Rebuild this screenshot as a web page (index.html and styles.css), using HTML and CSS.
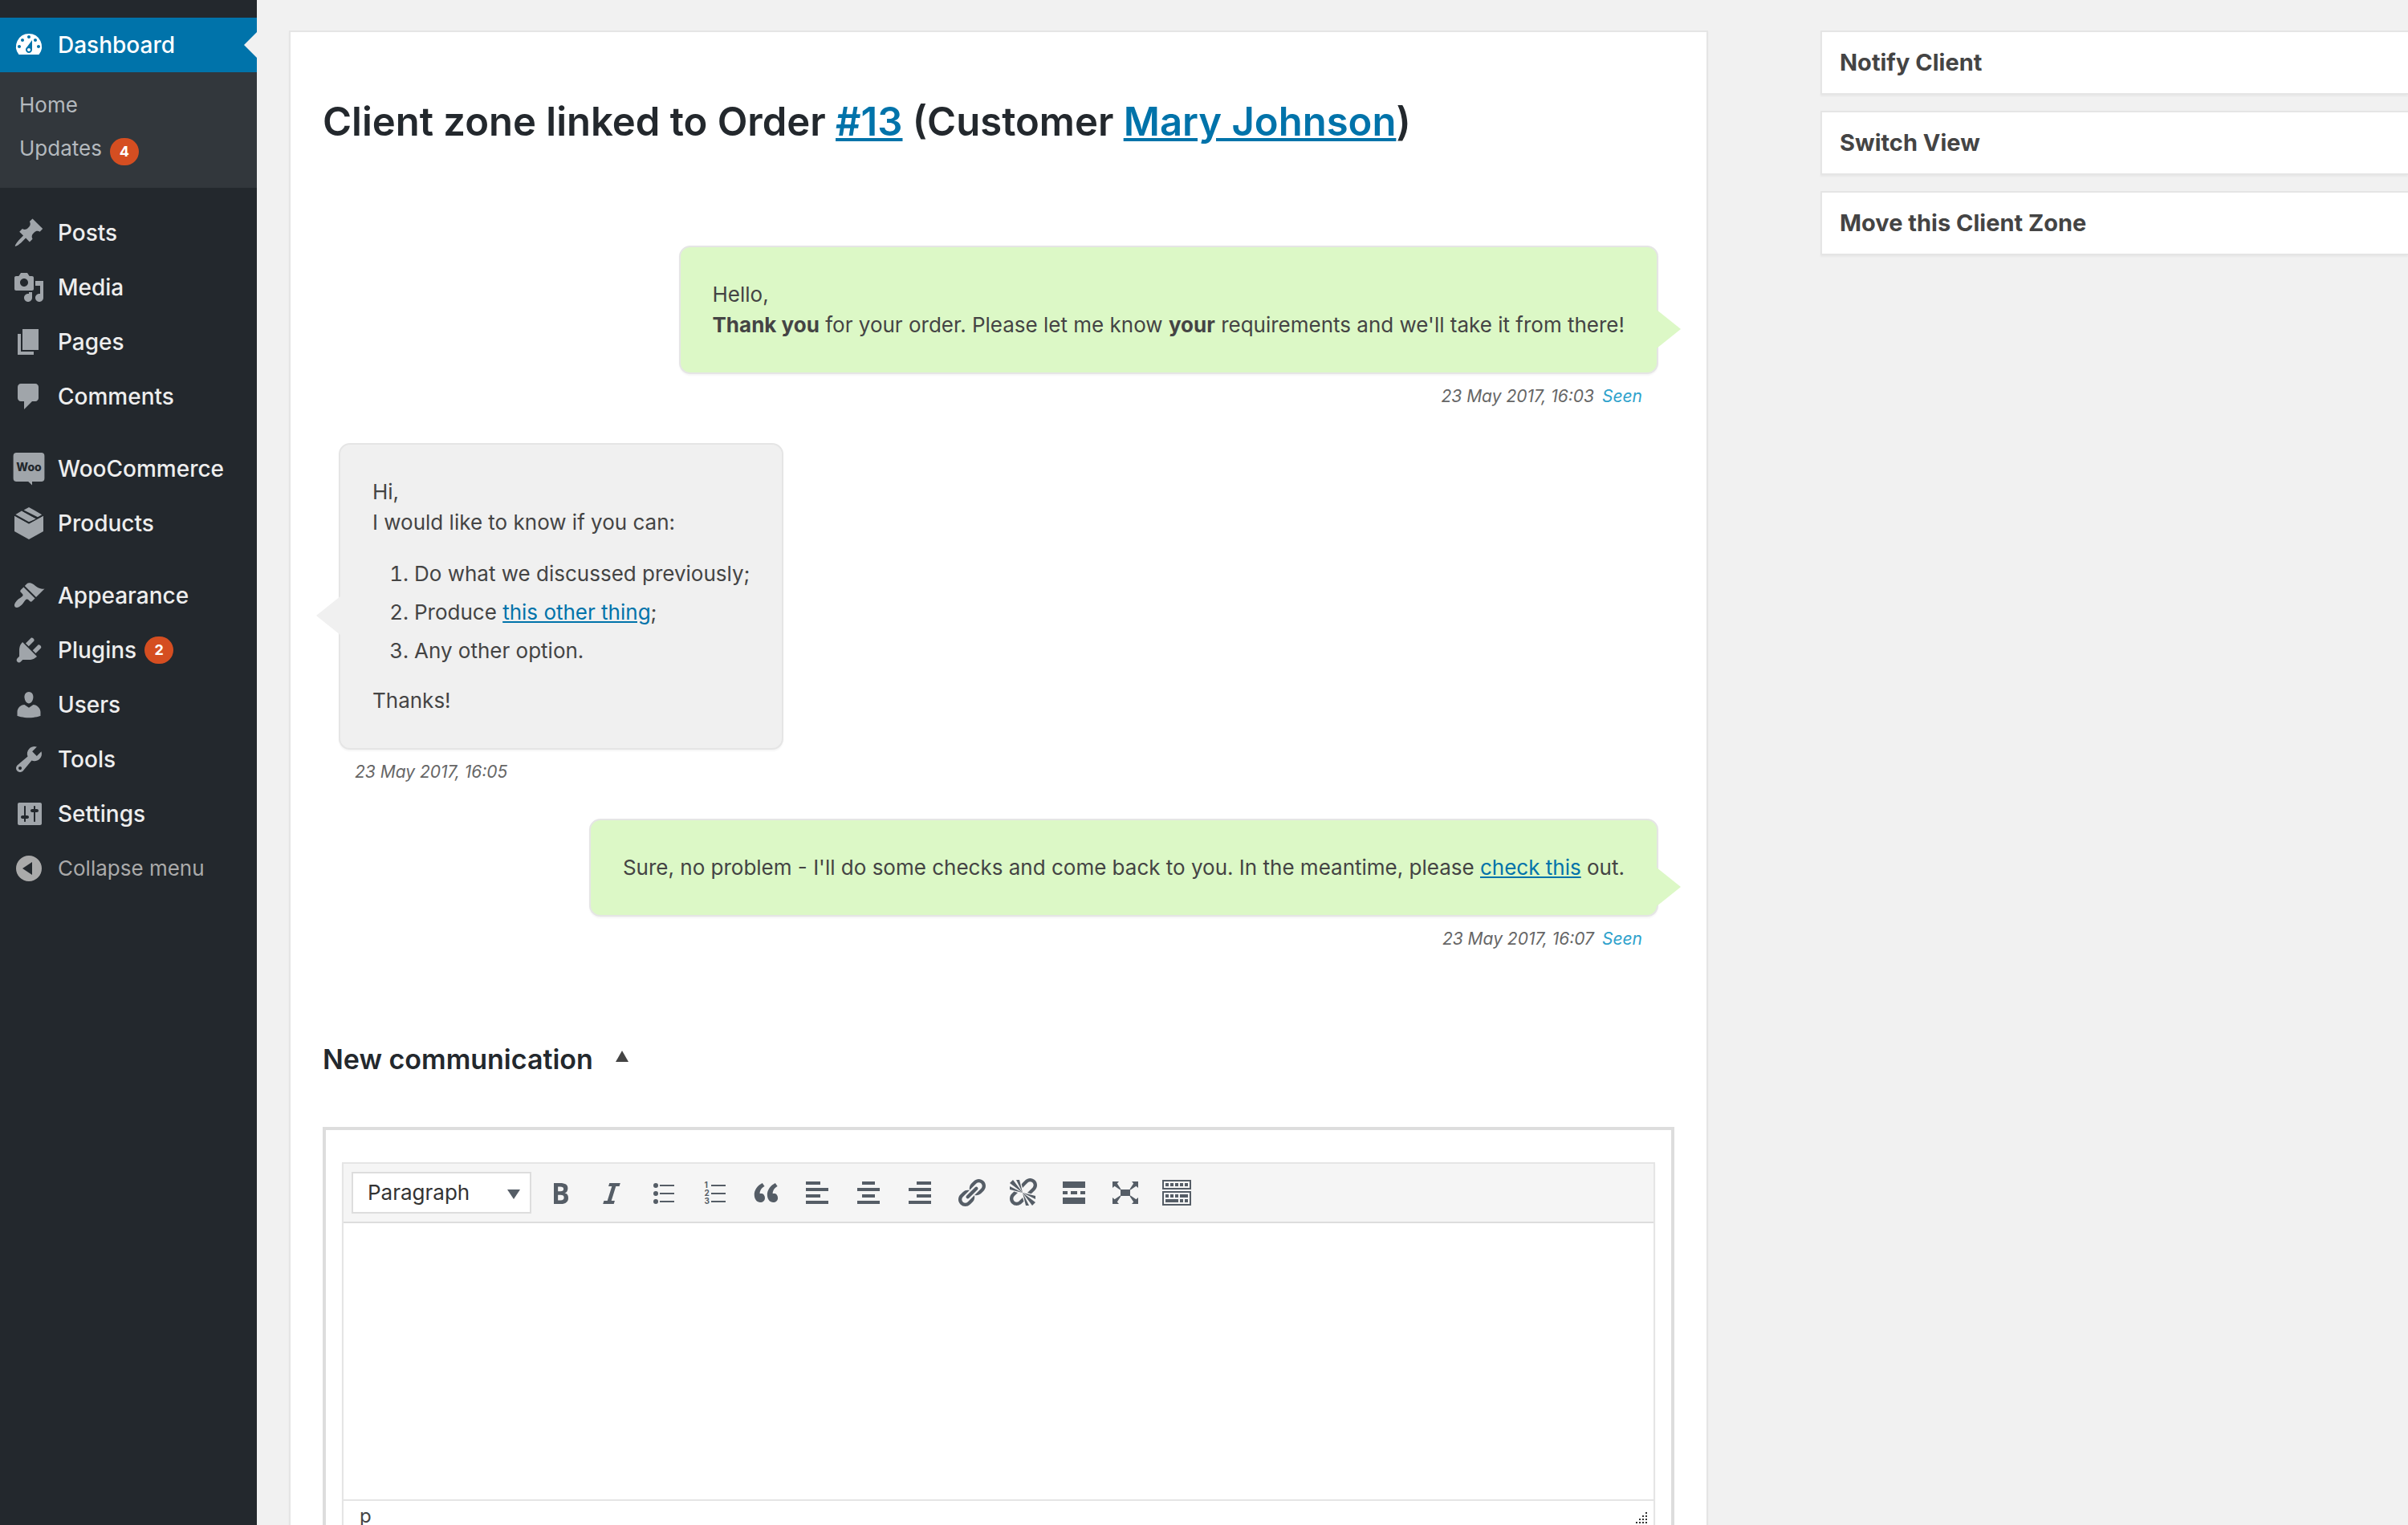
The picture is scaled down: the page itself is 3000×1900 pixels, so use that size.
FILE: index.html
```html
<!DOCTYPE html>
<html lang="en">
<head>
<meta charset="utf-8">
<title>Client zone</title>
<link rel="stylesheet" href="styles.css">
</head>
<body>
<div class="app">
  <nav class="sidebar" aria-label="Main menu">
    <ul class="menu">
      <li>
        <a class="menu-link current" href="#"><svg class="icon" viewBox="0 0 20 20"><path d="M3.76 16h12.48A7.998 7.998 0 0 0 10 3a7.998 7.998 0 0 0-6.24 13zM10 4c.55 0 1 .45 1 1s-.45 1-1 1-1-.45-1-1 .45-1 1-1zM6 6c.55 0 1 .45 1 1s-.45 1-1 1-1-.45-1-1 .45-1 1-1zm8 0c.55 0 1 .45 1 1s-.45 1-1 1-1-.45-1-1 .45-1 1-1zm-5.37 5.55L12 7v6c0 1.1-.9 2-2 2s-2-.9-2-2c0-.57.24-1.08.63-1.45zM4 10c.55 0 1 .45 1 1s-.45 1-1 1-1-.45-1-1 .45-1 1-1zm12 0c.55 0 1 .45 1 1s-.45 1-1 1-1-.45-1-1 .45-1 1-1zm-5 3c0-.55-.45-1-1-1s-1 .45-1 1 .45 1 1 1 1-.45 1-1z"/></svg>Dashboard</a>
        <ul class="submenu">
          <li><a href="#">Home</a></li>
          <li><a href="#">Updates <span class="badge">4</span></a></li>
        </ul>
      </li>
      <li class="group"><a class="menu-link" href="#"><svg class="icon" viewBox="0 0 20 20"><path d="M10.44 3.02l1.82-1.82 6.36 6.35-1.83 1.82c-1.05-.68-2.48-.57-3.41.36l-.75.75c-.92.93-1.04 2.35-.35 3.41l-1.83 1.82-2.41-2.41-2.8 2.79c-.42.42-3.38 2.71-3.8 2.29s1.86-3.39 2.28-3.81l2.79-2.79L4.1 9.36l1.83-1.82c1.05.69 2.48.57 3.4-.36l.75-.75c.93-.92 1.05-2.35.36-3.41z"/></svg>Posts</a></li>
      <li><a class="menu-link" href="#"><svg class="icon" viewBox="0 0 20 20"><path d="M13 11V4c0-.55-.45-1-1-1h-1.67L9 1H5L3.67 3H2c-.55 0-1 .45-1 1v7c0 .55.45 1 1 1h10c.55 0 1-.45 1-1zM7 4.5c1.38 0 2.5 1.12 2.5 2.5S8.38 9.5 7 9.5 4.5 8.38 4.5 7 5.62 4.5 7 4.5zM14 6h5v10.5c0 1.38-1.12 2.5-2.5 2.5S14 17.88 14 16.5s1.12-2.5 2.5-2.5c.17 0 .34.02.5.05V9h-3V6zm-4 8.05V13h2v3.5c0 1.38-1.12 2.5-2.5 2.5S7 17.88 7 16.5 8.12 14 9.5 14c.17 0 .34.02.5.05z"/></svg>Media</a></li>
      <li><a class="menu-link" href="#"><svg class="icon" viewBox="0 0 20 20"><path d="M6 15V2h10v13H6zm-1 1h8v2H3V5h2v11z"/></svg>Pages</a></li>
      <li><a class="menu-link" href="#"><svg class="icon" viewBox="0 0 20 20"><path d="M5 2h9c1.1 0 2 .9 2 2v7c0 1.1-.9 2-2 2h-2l-5 5v-5H5c-1.1 0-2-.9-2-2V4c0-1.1.9-2 2-2z"/></svg>Comments</a></li>
      <li class="group"><a class="menu-link" href="#"><svg class="icon" viewBox="0 0 20 20"><path d="M2.300 0h15.400a2 2 0 0 1 2 2v14a2 2 0 0 1-2 2H12v2.200L9.600 18H2.300a2 2 0 0 1-2-2V2a2 2 0 0 1 2-2z"/><text class="woo-mark" x="10" y="11.300" text-anchor="middle" aria-hidden="true">Woo</text></svg>WooCommerce</a></li>
      <li><a class="menu-link" href="#"><svg class="icon" viewBox="0 0 20 20"><path d="M10 0l3.200 1.800 4.900 2.800-2.600 1.500L6.800 1.800zM5.500 2.300l9.100 5L10 9.100 1.700 4.500zM1 5.300l9 5 9-5v9.700l-9 5-9-5z"/><path class="box-fold" d="M1 5l9 4.900L19 5M6.200 2.200l9 5"/></svg>Products</a></li>
      <li class="group"><a class="menu-link" href="#"><svg class="icon" viewBox="0 0 20 20"><path d="M14.480 11.060L7.410 3.990l1.500-1.500c.5-.56 2.300-.47 3.510.32 1.210.8 1.430 1.280 2.910 2.100 1.180.64 2.450 1.260 4.450.85zm-.71.71L6.700 4.700 4.930 6.470c-.39.39-.39 1.020 0 1.410l1.060 1.060c.39.39.39 1.030 0 1.420-.6.6-1.430 1.110-2.210 1.690-.35.26-.7.53-1.010.84C1.430 14.230.4 16.080 1.400 17.070c.99 1 2.840-.03 4.180-1.360.31-.31.58-.66.85-1.020.57-.78 1.080-1.610 1.690-2.210.39-.39 1.020-.39 1.410 0l1.060 1.060c.39.39 1.020.39 1.410 0z"/></svg>Appearance</a></li>
      <li><a class="menu-link" href="#"><svg class="icon" viewBox="0 0 20 20"><path d="M13.110 4.360L9.870 7.600 8 5.730l3.240-3.240c.35-.34 1.050-.2 1.560.32.52.51.66 1.210.31 1.550zm-8 1.770l.91-1.120 9.010 9.010-1.190.84c-.71.71-2.630 1.160-3.820 1.160H6.140L4.900 17.260c-.59.59-1.540.59-2.120 0-.59-.58-.59-1.530 0-2.120l1.240-1.240v-3.880c0-1.130.4-3.190 1.090-3.890zm7.260 3.970l3.240-3.240c.34-.35 1.040-.21 1.550.31.52.51.66 1.210.31 1.550l-3.240 3.250z"/></svg>Plugins <span class="badge">2</span></a></li>
      <li><a class="menu-link" href="#"><svg class="icon" viewBox="0 0 20 20"><path d="M10 9.250c-2.270 0-2.730-3.440-2.730-3.440C7 4.020 7.820 2 9.970 2c2.160 0 2.980 2.020 2.710 3.810 0 0-.41 3.440-2.680 3.440zm0 2.570L12.720 10c2.390 0 4.520 2.330 4.520 4.530v2.490s-3.650 1.130-7.240 1.130c-3.650 0-7.240-1.130-7.240-1.130v-2.490c0-2.250 1.940-4.480 4.470-4.480z"/></svg>Users</a></li>
      <li><a class="menu-link" href="#"><svg class="icon" viewBox="0 0 20 20"><path d="M16.680 9.770c-1.340 1.340-3.300 1.670-4.950.99l-5.410 6.520c-.99.99-2.590.99-3.580 0s-.99-2.590 0-3.570l6.520-5.420c-.68-1.650-.35-3.610.99-4.950 1.280-1.280 3.120-1.620 4.720-1.060l-2.890 2.890 2.820 2.820 2.860-2.870c.53 1.580.18 3.390-1.080 4.650zM3.810 16.210c.4.39 1.040.39 1.430 0 .4-.4.4-1.040 0-1.430-.39-.4-1.030-.4-1.430 0-.39.39-.39 1.030 0 1.430z"/></svg>Tools</a></li>
      <li><a class="menu-link" href="#"><svg class="icon" viewBox="0 0 20 20"><path d="M18 16V4c0-.55-.45-1-1-1H4c-.55 0-1 .45-1 1v12c0 .55.45 1 1 1h13c.55 0 1-.45 1-1zM8 11h1c.55 0 1 .45 1 1s-.45 1-1 1H8v1.500c0 .28-.22.5-.5.5s-.5-.22-.5-.5V13H6c-.55 0-1-.45-1-1s.45-1 1-1h1V5.500c0-.28.22-.5.5-.5s.5.22.5.5V11zm5-2h-1c-.55 0-1-.45-1-1s.45-1 1-1h1V5.500c0-.28.22-.5.5-.5s.5.22.5.5V7h1c.55 0 1 .45 1 1s-.45 1-1 1h-1v5.500c0 .28-.22.5-.5.5s-.5-.22-.5-.5V9z"/></svg>Settings</a></li>
      <li><button class="menu-link collapse" type="button"><svg class="icon" viewBox="0 0 20 20"><path fill-rule="evenodd" d="M10 2a8 8 0 1 0 0 16 8 8 0 0 0 0-16zM12 6v8l-6-4z"/></svg>Collapse menu</button></li>
    </ul>
  </nav>

  <main class="content">
    <section class="panel">
      <h1>Client zone linked to Order <a href="#">#13</a> (Customer <a href="#">Mary Johnson</a>)</h1>

      <div class="thread">
        <article class="message sent">
          <div class="bubble"><p>Hello,<br><strong>Thank you</strong> for your order. Please let me know <strong>your</strong> requirements and we'll take it from there!</p></div>
          <p class="meta">23 May 2017, 16:03 <span class="seen">Seen</span></p>
        </article>
        <article class="message received">
          <div class="bubble">
            <p>Hi,<br>I would like to know if you can:</p>
            <ol>
              <li>Do what we discussed previously;</li>
              <li>Produce <a href="#">this other thing</a>;</li>
              <li>Any other option.</li>
            </ol>
            <p>Thanks!</p>
          </div>
          <p class="meta">23 May 2017, 16:05</p>
        </article>
        <article class="message sent">
          <div class="bubble"><p>Sure, no problem - I'll do some checks and come back to you. In the meantime, please <a href="#">check this</a> out.</p></div>
          <p class="meta">23 May 2017, 16:07 <span class="seen">Seen</span></p>
        </article>
      </div>

      <h2><button class="toggle" type="button" aria-expanded="true">New communication <svg class="toggle-arrow" viewBox="0 0 16 14"><path d="M8 0l8 14H0z"/></svg></button></h2>

      <div class="composer">
        <div class="editor">
          <div class="toolbar" role="toolbar" aria-label="Formatting">
            <div class="format">
              <select aria-label="Text format"><option>Paragraph</option></select>
              <svg class="format-arrow" viewBox="0 0 16 12"><path d="M0 0h16L8 12z"/></svg>
            </div>
            <button class="tool" type="button" aria-label="Bold"><svg class="icon" viewBox="0 0 20 20"><path d="M6 4v13h4.540c1.370 0 2.460-.33 3.260-1 .8-.66 1.200-1.580 1.200-2.770 0-.84-.17-1.510-.51-2.010s-.9-.85-1.670-1.030v-.09c.57-.1 1.020-.4 1.360-.9s.51-1.130.51-1.910c0-1.140-.39-1.980-1.170-2.500C12.750 4.260 11.500 4 9.780 4H6zm2.570 5.150V6.260h1.360c.73 0 1.270.11 1.610.32.34.22.51.58.51 1.070 0 .54-.16.92-.47 1.150s-.82.35-1.510.35h-1.500zm0 2.190h1.600c1.440 0 2.160.53 2.160 1.610 0 .6-.17 1.050-.51 1.340s-.86.43-1.570.43H8.570v-3.380z"/></svg></button>
            <button class="tool" type="button" aria-label="Italic"><svg class="icon" viewBox="0 0 20 20"><path d="M14.780 6h-2.130l-2.800 9h2.120l-.62 2H4.600l.62-2h2.140l2.800-9H8.030l.62-2h6.750z"/></svg></button>
            <button class="tool" type="button" aria-label="Bulleted list"><svg class="icon" viewBox="0 0 20 20"><circle cx="5.500" cy="5.500" r="1.500"/><circle cx="5.500" cy="10.500" r="1.500"/><circle cx="5.500" cy="15.500" r="1.500"/><path d="M8 5h9v1H8zM8 10h9v1H8zM8 15h9v1H8z"/></svg></button>
            <button class="tool" type="button" aria-label="Numbered list"><svg class="icon" viewBox="0 0 20 20"><path d="M8 5h9v1H8zM8 10h9v1H8zM8 15h9v1H8z"/><g class="list-digits" aria-hidden="true"><text x="3.800" y="7">1</text><text x="3.800" y="12">2</text><text x="3.800" y="17">3</text></g></svg></button>
            <button class="tool" type="button" aria-label="Blockquote"><svg class="icon" viewBox="0 0 20 20"><path d="M9.490 13.220c0-.74-.2-1.380-.61-1.900-.62-.78-1.830-.88-2.530-.72-.29-1.650 1.110-3.750 2.920-4.650L7.880 4c-2.730 1.300-5.420 4.280-4.960 8.050C3.210 14.430 4.590 16 6.540 16c.85 0 1.560-.25 2.120-.75s.83-1.180.83-2.030zm8.050 0c0-.74-.2-1.380-.61-1.900-.63-.78-1.830-.88-2.530-.72-.29-1.650 1.110-3.750 2.920-4.650L15.930 4c-2.730 1.300-5.410 4.280-4.950 8.050.29 2.380 1.660 3.950 3.610 3.950.85 0 1.560-.25 2.120-.75s.83-1.180.83-2.030z"/></svg></button>
            <button class="tool" type="button" aria-label="Align left"><svg class="icon" viewBox="0 0 20 20"><path d="M3 3h9v2H3zM3 7h14v2H3zM3 11h9v2H3zM3 15h14v2H3z"/></svg></button>
            <button class="tool" type="button" aria-label="Align centre"><svg class="icon" viewBox="0 0 20 20"><path d="M6 3h8v2H6zM3 7h14v2H3zM6 11h8v2H6zM3 15h14v2H3z"/></svg></button>
            <button class="tool" type="button" aria-label="Align right"><svg class="icon" viewBox="0 0 20 20"><path d="M8 3h9v2H8zM3 7h14v2H3zM8 11h9v2H8zM3 15h14v2H3z"/></svg></button>
            <button class="tool" type="button" aria-label="Insert link"><svg class="icon" viewBox="0 0 20 20"><path d="M17.740 2.760c1.680 1.690 1.680 4.410 0 6.100l-1.530 1.520c-1.120 1.120-2.700 1.470-4.140 1.090l2.620-2.610.76-.77.76-.76c.84-.84.84-2.200 0-3.040-.84-.85-2.200-.85-3.040 0l-.77.76-3.380 3.380c-.37-1.440-.02-3.020 1.100-4.140l1.520-1.530c1.690-1.680 4.420-1.680 6.100 0zM8.590 13.430l5.340-5.340c.42-.42.42-1.100 0-1.520-.44-.43-1.130-.39-1.530 0l-5.330 5.340c-.42.42-.42 1.100 0 1.520.44.43 1.130.39 1.520 0zm-.76 2.290l4.140-4.150c.38 1.440.03 3.020-1.090 4.140l-1.520 1.530c-1.690 1.680-4.410 1.680-6.100 0-1.680-1.680-1.680-4.420 0-6.100l1.530-1.520c1.120-1.120 2.700-1.470 4.140-1.100l-4.140 4.150c-.85.84-.85 2.200 0 3.050.84.84 2.200.84 3.040 0z"/></svg></button>
            <button class="tool" type="button" aria-label="Remove link"><svg class="icon" viewBox="0 0 20 20"><path d="M17.740 2.260c1.680 1.690 1.680 4.410 0 6.100l-1.530 1.520c-.32.33-.69.58-1.080.77L13 10l1.690-1.640.76-.77.76-.76c.84-.84.84-2.200 0-3.040-.84-.85-2.200-.85-3.040 0l-.77.76-.76.76L10 7l-.65-2.140c.19-.38.44-.75.77-1.070l1.520-1.530c1.690-1.680 4.420-1.680 6.100 0zM2 4l8 6-6-8zm4-2l4 8-2-8H6zM2 6l8 4-8-2V6zm7.360 7.690L10 13l.74 2.350-1.380 1.390c-1.690 1.680-4.410 1.680-6.100 0-1.680-1.680-1.680-4.420 0-6.100l1.390-1.380L7 10l-.69.64-1.520 1.530c-.85.84-.85 2.200 0 3.040.84.85 2.200.85 3.040 0zM18 16l-8-6 6 8zm-4 2l-4-8 2 8h2zm4-4l-8-4 8 2v2z"/></svg></button>
            <button class="tool" type="button" aria-label="Read more tag"><svg class="icon" viewBox="0 0 20 20"><path d="M17 7V3H3v4h14zM6 11V9H3v2h3zm6 0V9H8v2h4zm5 0V9h-3v2h3zm0 6v-4H3v4h14z"/></svg></button>
            <button class="tool" type="button" aria-label="Full screen"><svg class="icon" viewBox="0 0 20 20"><path d="M7 8h6v4H7zM2 3h4L4.900 4.300 7.200 7.800 6.800 8.200 3.300 5.900 2 7zM18 3h-4l1.100 1.300-2.300 3.500.4.4 3.500-2.300L18 7zM2 17h4l-1.100-1.300 2.300-3.500-.4-.4-3.500 2.300L2 13zM18 17h-4l1.100-1.300-2.300-3.500.4-.4 3.500 2.300L18 13z"/></svg></button>
            <button class="tool" type="button" aria-label="Toolbar toggle"><svg class="icon" viewBox="0 0 20 20"><path d="M19 2v6H1V2h18zm-1 5V3H2v4h16zM5 4v2H3V4h2zm3 0v2H6V4h2zm3 0v2H9V4h2zm3 0v2h-2V4h2zm3 0v2h-2V4h2zm2 5v9H1V9h18zm-1 8v-7H2v7h16zM5 11v2H3v-2h2zm3 0v2H6v-2h2zm3 0v2H9v-2h2zm6 0v2h-5v-2h5zm-6 3v2H3v-2h8zm3 0v2h-2v-2h2zm3 0v2h-2v-2h2z"/></svg></button>
          </div>
          <textarea aria-label="Message"></textarea>
          <div class="status">
            <span>p</span>
            <svg class="grip" viewBox="0 0 14 14"><path d="M12 0h2v2h-2zM8 4h2v2H8zM12 4h2v2h-2zM4 8h2v2H4zM8 8h2v2H8zM12 8h2v2h-2zM0 12h2v2H0zM4 12h2v2H4zM8 12h2v2H8zM12 12h2v2h-2z"/></svg>
          </div>
        </div>
      </div>
    </section>

    <aside class="side">
      <h2 class="side-box">Notify Client</h2>
      <h2 class="side-box">Switch View</h2>
      <h2 class="side-box">Move this Client Zone</h2>
    </aside>
  </main>
</div>
</body>
</html>
```
FILE: styles.css
```css
* {
  box-sizing: border-box;
}

body {
  margin: 0;
  background: #f1f1f1;
  color: #444;
  font: 26px/38px Inter, "Liberation Sans", sans-serif;
}

h1, h2, p, ul, ol {
  margin: 0;
  padding: 0;
}

a {
  color: #0073aa;
}

button, select, textarea {
  margin: 0;
  padding: 0;
  border: 0;
  background: none;
  color: inherit;
  font: inherit;
}

.app {
  display: flex;
  height: 100vh;
  overflow: hidden;
}

.icon {
  flex: none;
  display: block;
  width: 40px;
  height: 40px;
  fill: currentColor;
  overflow: visible;
}

/* Sidebar */
.sidebar {
  flex: 0 0 320px;
  padding-top: 22px;
  background: #23282d;
}

.menu, .submenu {
  list-style: none;
}

.group {
  margin-top: 22px;
}

.menu-link {
  position: relative;
  display: flex;
  align-items: center;
  width: 100%;
  height: 68px;
  padding-left: 16px;
  color: #eee;
  font-size: 28px;
  font-weight: 500;
  text-decoration: none;
}

.menu-link .icon {
  margin-right: 16px;
  color: #a0a5aa;
}

.current, .current .icon {
  color: #fff;
}

.current {
  background: #0073aa;
}

.current::after {
  content: "";
  position: absolute;
  top: 18px;
  right: 0;
  border: 16px solid transparent;
  border-left: 0;
  border-right-color: #f1f1f1;
}

.collapse, .collapse .icon {
  color: #aaa;
}

.collapse {
  font-size: 26px;
  font-weight: 400;
}

.woo-mark {
  fill: #23282d;
  font-size: 7px;
  font-weight: 800;
}

.box-fold {
  fill: none;
  stroke: #23282d;
  stroke-width: 0.6px;
}

.submenu {
  padding: 14px 0 22px 24px;
  background: #32373c;
}

.submenu a {
  display: flex;
  align-items: center;
  height: 54px;
  color: #b4b9be;
  text-decoration: none;
}

.badge {
  width: 36px;
  height: 34px;
  margin-left: 10px;
  border-radius: 17px;
  background: #d54e21;
  color: #fff;
  font-size: 18px;
  font-weight: 700;
  line-height: 34px;
  text-align: center;
}

.submenu .badge {
  margin-top: 8px;
}

/* Main area */
.content {
  flex: 1;
  display: grid;
  grid-template-columns: minmax(0, 1768fr) minmax(0, 732fr);
  align-items: start;
  gap: 140px;
  padding: 38px 0 0 40px;
}

.panel {
  padding: 80px 40px 40px;
  border: 2px solid #e5e5e5;
  background: #fff;
  box-shadow: 0 2px 2px rgba(0, 0, 0, 0.04);
}

h1 {
  color: #23282d;
  font-size: 49px;
  font-weight: 600;
  line-height: 64px;
}

.thread {
  padding: 122px 20px 68px;
}

.message {
  display: flex;
  flex-direction: column;
  align-items: flex-start;
}

.sent {
  align-items: flex-end;
}

.bubble {
  position: relative;
  padding: 40px;
  border: 2px solid #e5e5e5;
  border-radius: 14px;
  background: #f0f0f0;
  box-shadow: 0 2px 2px rgba(0, 0, 0, 0.04);
}

.sent .bubble {
  background: #dcf8c6;
}

.bubble::after {
  content: "";
  position: absolute;
  top: 50%;
  right: 100%;
  border: 24px solid transparent;
  border-left: 0;
  border-right: 30px solid #f0f0f0;
}

.sent .bubble::after {
  right: auto;
  left: 100%;
  border-right: 0;
  border-left: 30px solid #dcf8c6;
}

.bubble ol {
  padding: 26px 0 14px 52px;
}

.bubble li {
  margin-bottom: 10px;
}

.meta {
  padding: 14px 20px 44px;
  color: #666;
  font-size: 21px;
  font-style: italic;
  line-height: 28px;
}

.seen {
  margin-left: 4px;
  color: #2ea2cc;
}

.toggle {
  display: flex;
  align-items: center;
  gap: 28px;
  color: #23282d;
  font-size: 34px;
  font-weight: 600;
  line-height: 48px;
}

.toggle-arrow {
  width: 16px;
  height: 14px;
  margin-bottom: 8px;
  fill: #444;
}

/* Editor */
.composer {
  margin-top: 60px;
  padding: 40px 20px;
  border: 4px solid #ddd;
}

.editor {
  border: 2px solid #e5e5e5;
  box-shadow: 0 2px 2px rgba(0, 0, 0, 0.04);
}

.toolbar {
  display: flex;
  align-items: center;
  padding: 10px;
  border-bottom: 2px solid #ddd;
  background: #f5f5f5;
  color: #555d66;
}

.format {
  position: relative;
  width: 224px;
  margin-right: 4px;
}

.format select {
  appearance: none;
  display: block;
  width: 100%;
  height: 52px;
  padding-left: 18px;
  border: 2px solid #ddd;
  border-radius: 0;
  background: #fff;
  color: #333;
}

.format-arrow {
  position: absolute;
  top: 22px;
  right: 14px;
  width: 16px;
  height: 12px;
  fill: #555d66;
  pointer-events: none;
}

.tool {
  display: flex;
  justify-content: center;
  width: 64px;
}

.list-digits {
  font-size: 5px;
  font-weight: 700;
}

textarea {
  display: block;
  width: 100%;
  height: 344px;
  padding: 20px;
  resize: none;
}

.status {
  display: flex;
  justify-content: space-between;
  padding: 0 8px 6px 20px;
  border-top: 2px solid #e5e5e5;
  font-size: 24px;
}

.grip {
  width: 14px;
  height: 14px;
  margin-top: 14px;
  fill: #333;
}

/* Side column */
.side {
  display: grid;
  gap: 20px;
}

.side-box {
  padding: 19px 22px;
  border: 2px solid #e5e5e5;
  border-right: 0;
  background: #fff;
  box-shadow: 0 2px 2px rgba(0, 0, 0, 0.04);
  font-size: 29px;
  font-weight: 700;
}
```
